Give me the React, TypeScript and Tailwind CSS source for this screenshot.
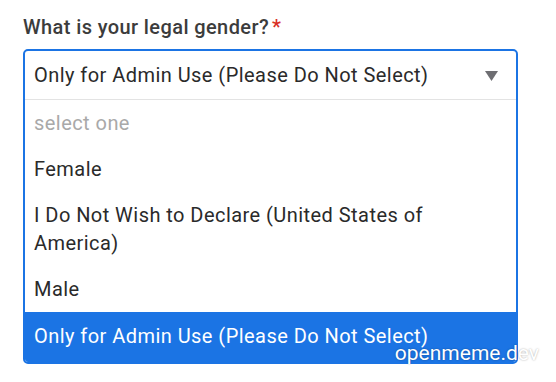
const options = [
  { label: 'select one', muted: true },
  { label: 'Female' },
  { label: 'I Do Not Wish to Declare (United States of America)' },
  { label: 'Male' },
  { label: 'Only for Admin Use (Please Do Not Select)', selected: true },
];

export default function App() {
  return (
    <div className="relative w-[556px] h-[382px] bg-white font-['Roboto',sans-serif] text-[#202124] overflow-hidden">
      <div className="pt-[14px] pl-[23px] pr-[38px]">
        {/* label */}
        <div className="flex items-start text-[20px] leading-[26px] tracking-[0.4px] font-medium text-[#3c3c3c]">
          What is your legal gender?
          <span className="ml-[3px] text-[#d93025]">*</span>
        </div>

        {/* open select */}
        <div className="mt-[9px] border-2 border-[#1b74e4] rounded-[5px] overflow-hidden">
          <div className="flex items-center justify-between h-[49px] pl-[9px] pr-[18px] border-b border-[#e3e3e3]">
            <span className="text-[20px] tracking-[0.45px] text-[#2a2a2a]">Only for Admin Use (Please Do Not Select)</span>
            <svg width="13" height="10" viewBox="0 0 13 10" className="mt-[1px]">
              <path d="M0 0h13L6.5 10z" fill="#6e6e72" />
            </svg>
          </div>
          <ul>
            {options.map((o) => (
              <li
                key={o.label}
                className={`pl-[9px] pr-4 text-[20px] leading-[28px] tracking-[0.45px] ${
                  o.selected
                    ? 'pt-[10px] pb-[12px] bg-[#1b74e4] text-white'
                    : o.muted
                      ? 'py-[9px] text-[#a9a9a9]'
                      : 'py-[9px] text-[#2a2a2a]'
                }`}
              >
                {o.label}
              </li>
            ))}
          </ul>
        </div>
      </div>

      {/* watermark */}
      <div className="absolute right-[17px] bottom-[18px] text-[21px] leading-none text-white [text-shadow:0_0_2px_rgba(0,0,0,0.35)]">
        openmeme.dev
      </div>
    </div>
  );
}
